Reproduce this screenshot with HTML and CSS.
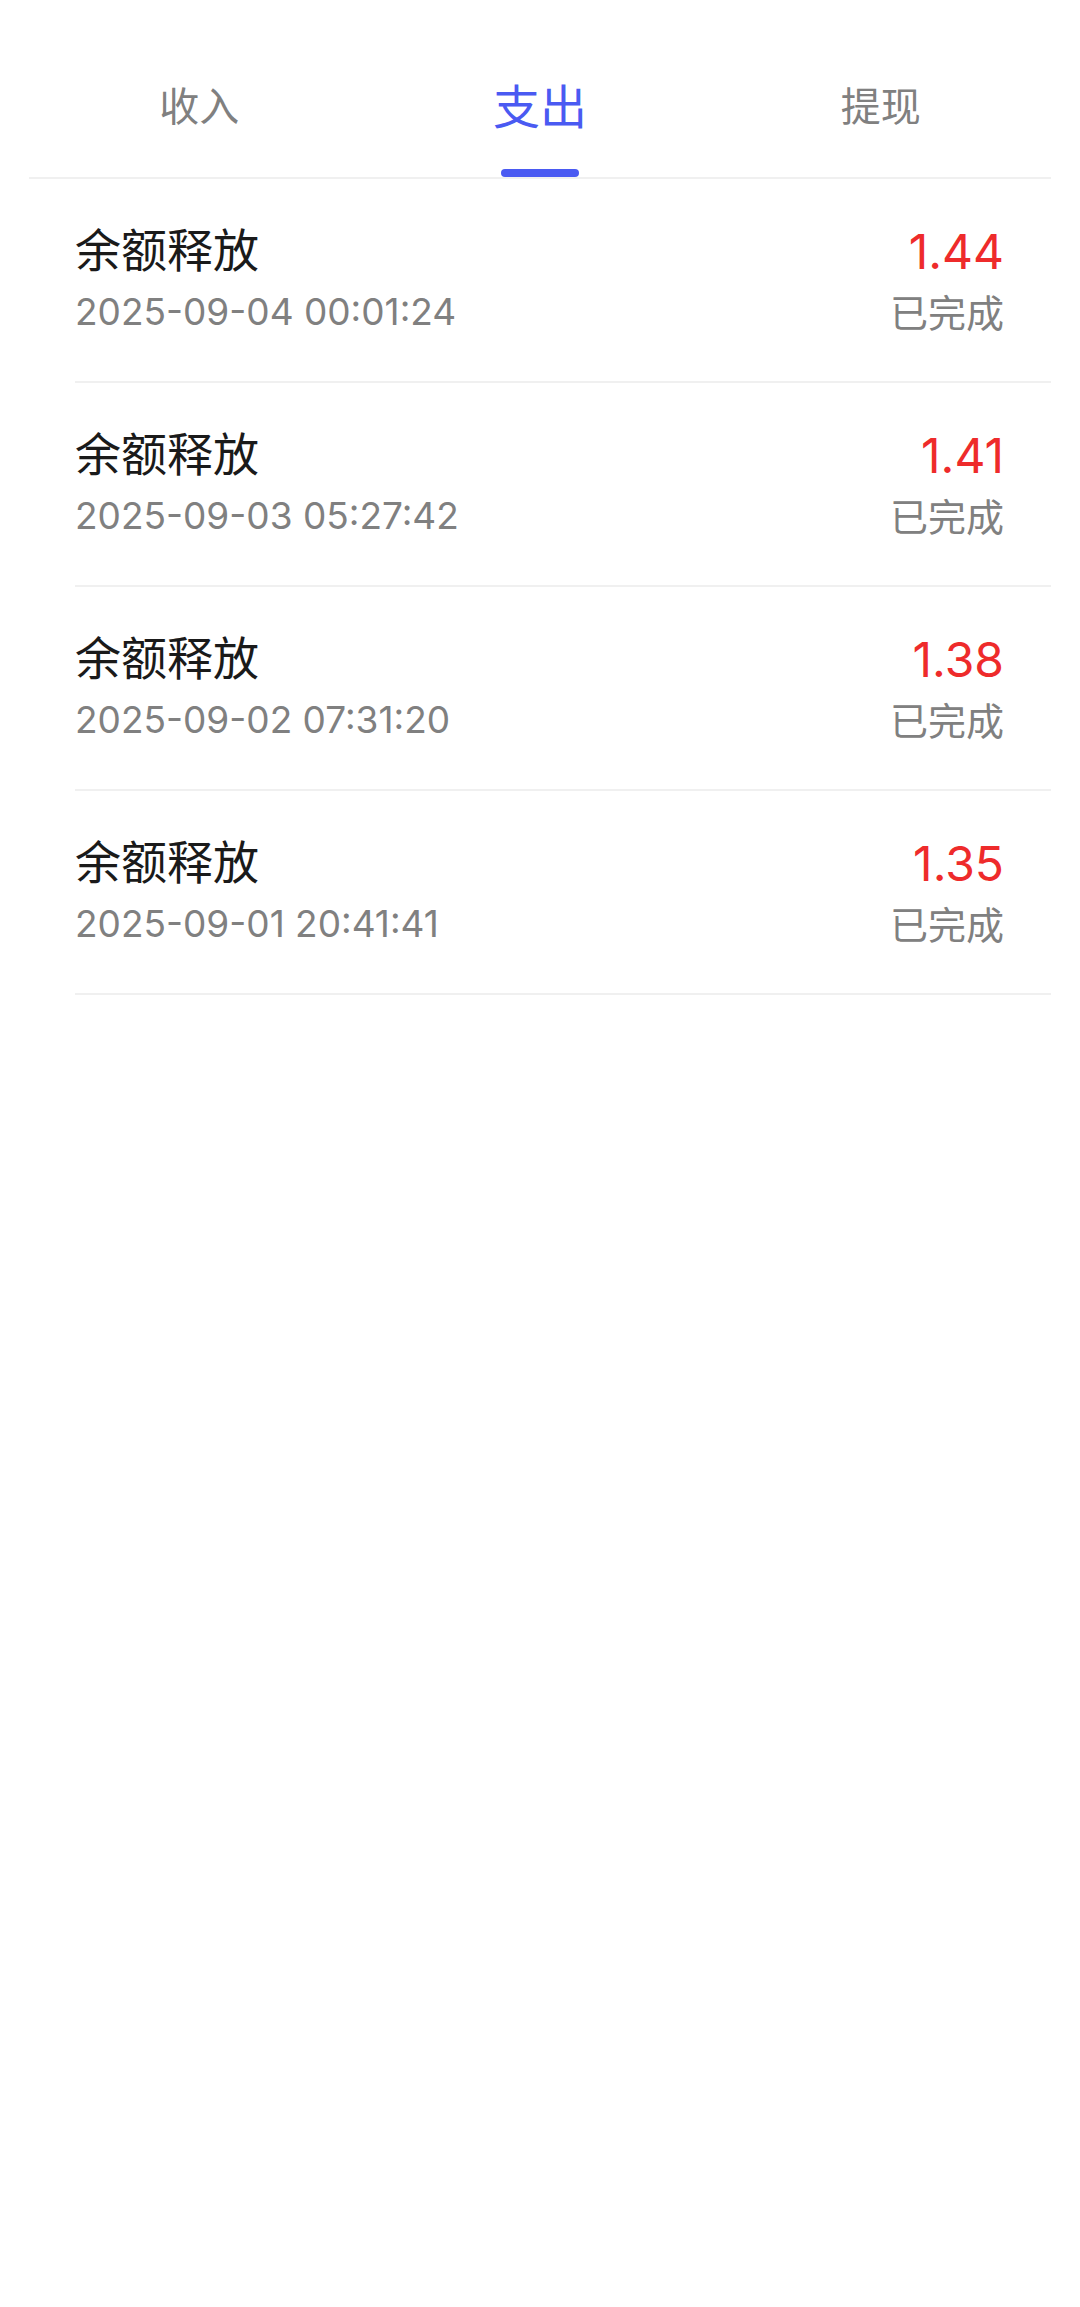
FILE: index.html
```html
<!DOCTYPE html>
<html lang="zh-CN">
<head>
<meta charset="utf-8">
<title>支出</title>
<link rel="stylesheet" href="styles.css">
</head>
<body>
<div class="page">
  <nav class="tabs">
    <div class="tab">收入</div>
    <div class="tab active">支出<span class="indicator"></span></div>
    <div class="tab">提现</div>
  </nav>
  <ul class="list">
    <li class="row">
      <div class="left">
        <div class="title">余额释放</div>
        <div class="date">2025-09-04 00:01:24</div>
      </div>
      <div class="right">
        <div class="amount">1.44</div>
        <div class="status">已完成</div>
      </div>
    </li>
    <li class="row">
      <div class="left">
        <div class="title">余额释放</div>
        <div class="date">2025-09-03 05:27:42</div>
      </div>
      <div class="right">
        <div class="amount">1.41</div>
        <div class="status">已完成</div>
      </div>
    </li>
    <li class="row">
      <div class="left">
        <div class="title">余额释放</div>
        <div class="date">2025-09-02 07:31:20</div>
      </div>
      <div class="right">
        <div class="amount">1.38</div>
        <div class="status">已完成</div>
      </div>
    </li>
    <li class="row">
      <div class="left">
        <div class="title">余额释放</div>
        <div class="date">2025-09-01 20:41:41</div>
      </div>
      <div class="right">
        <div class="amount">1.35</div>
        <div class="status">已完成</div>
      </div>
    </li>
  </ul>
</div>
</body>
</html>
```

FILE: styles.css
```css
html, body {
  margin: 0;
  padding: 0;
  background: #ffffff;
}

body {
  font-family: Inter, "Noto Sans CJK SC", sans-serif;
  width: 1080px;
  min-height: 2307px;
}

.page {
  display: flex;
  flex-direction: column;
}

.tabs {
  display: flex;
  margin: 0 29px;
  height: 177px;
  border-bottom: 2px solid #f0f0f0;
}

.tab {
  flex: 1;
  position: relative;
  display: flex;
  justify-content: center;
  align-items: flex-start;
  padding-top: 74px;
  box-sizing: border-box;
  height: 177px;
  line-height: 60px;
  font-family: "Noto Sans CJK SC", sans-serif;
  font-size: 40px;
  color: #808080;
}

.tab.active {
  font-size: 47px;
  color: #4a5af2;
}

.indicator {
  position: absolute;
  left: 50%;
  bottom: 0;
  width: 78px;
  height: 8px;
  margin-left: -39px;
  border-radius: 4px;
  background: #4a5af2;
}

.list {
  list-style: none;
  margin: 0 29px 0 75px;
  padding: 0;
}

.row {
  display: flex;
  justify-content: space-between;
  padding: 38px 47px 44px 0;
  border-bottom: 2px solid #f0f0f0;
}

.left, .right {
  display: flex;
  flex-direction: column;
}

.right {
  align-items: flex-end;
}

.title {
  font-family: "Noto Sans CJK SC", sans-serif;
  font-size: 46px;
  line-height: 60px;
  color: #1a1a1a;
}

.date {
  margin-top: 10px;
  font-size: 37px;
  line-height: 50px;
  color: #808080;
}

.amount {
  margin-top: 5px;
  font-size: 48px;
  line-height: 60px;
  color: #ee2b2b;
}

.status {
  margin-top: 4px;
  font-family: "Noto Sans CJK SC", sans-serif;
  font-size: 38px;
  line-height: 50px;
  color: #808080;
}
```
